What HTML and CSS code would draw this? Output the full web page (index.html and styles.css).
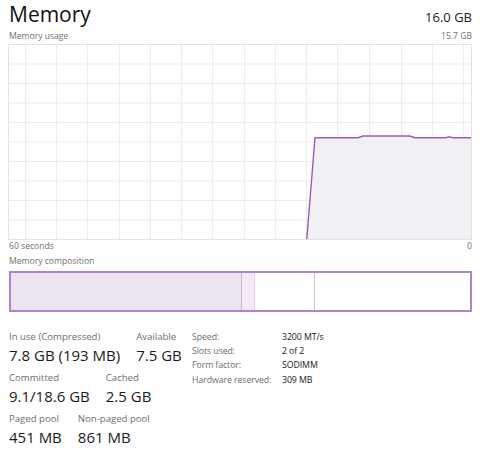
FILE: index.html
```html
<!DOCTYPE html>
<html>
<head>
<meta charset="utf-8">
<link rel="stylesheet" href="styles.css">
</head>
<body>
<div class="page">
  <div class="header">
    <div class="title">Memory</div>
    <div class="total">16.0 GB</div>
  </div>
  <div class="caption caption-top">
    <span>Memory usage</span>
    <span>15.7 GB</span>
  </div>
  <svg class="graph" width="464" height="196" viewBox="0 0 464 196">
    <g class="grid">
      <line x1="0" y1="20" x2="464" y2="20"/>
      <line x1="0" y1="39.5" x2="464" y2="39.5"/>
      <line x1="0" y1="59" x2="464" y2="59"/>
      <line x1="0" y1="78.5" x2="464" y2="78.5"/>
      <line x1="0" y1="98" x2="464" y2="98"/>
      <line x1="0" y1="117.5" x2="464" y2="117.5"/>
      <line x1="0" y1="137" x2="464" y2="137"/>
      <line x1="0" y1="156.5" x2="464" y2="156.5"/>
      <line x1="0" y1="176" x2="464" y2="176"/>
      <line x1="17.5" y1="0" x2="17.5" y2="196"/>
      <line x1="48.5" y1="0" x2="48.5" y2="196"/>
      <line x1="79.5" y1="0" x2="79.5" y2="196"/>
      <line x1="111.5" y1="0" x2="111.5" y2="196"/>
      <line x1="142.5" y1="0" x2="142.5" y2="196"/>
      <line x1="173.5" y1="0" x2="173.5" y2="196"/>
      <line x1="204.5" y1="0" x2="204.5" y2="196"/>
      <line x1="236.5" y1="0" x2="236.5" y2="196"/>
      <line x1="267.5" y1="0" x2="267.5" y2="196"/>
      <line x1="298.5" y1="0" x2="298.5" y2="196"/>
      <line x1="329.5" y1="0" x2="329.5" y2="196"/>
      <line x1="361.5" y1="0" x2="361.5" y2="196"/>
      <line x1="393.5" y1="0" x2="393.5" y2="196"/>
      <line x1="424.5" y1="0" x2="424.5" y2="196"/>
      <line x1="455.5" y1="0" x2="455.5" y2="196"/>
    </g>
    <polygon class="area" points="298.7,195.5 307,93.7 350,93.7 355,92 402,92 407,93.7 438,93.7 441,92.7 445,93.7 463,93.7 463,195.5"/>
    <polyline class="line" points="298.7,196 307,93.7 350,93.7 355,92 402,92 407,93.7 438,93.7 441,92.7 445,93.7 463,93.7"/>
    <rect class="frame" x="0.5" y="0.5" width="463" height="195"/>
  </svg>
  <div class="caption caption-axis">
    <span>60 seconds</span>
    <span>0</span>
  </div>
  <div class="caption caption-comp">
    <span>Memory composition</span>
  </div>
  <div class="comp">
    <div class="seg seg-inuse" style="width:231px"></div>
    <div class="seg seg-modified" style="width:13px"></div>
    <div class="seg seg-standby" style="width:60px"></div>
    <div class="seg seg-free"></div>
  </div>
  <div class="stats">
    <div class="stats-left">
      <div class="stat-row">
        <div class="stat">
          <div class="stat-label">In use (Compressed)</div>
          <div class="stat-value">7.8 GB (193 MB)</div>
        </div>
        <div class="stat">
          <div class="stat-label">Available</div>
          <div class="stat-value">7.5 GB</div>
        </div>
      </div>
      <div class="stat-row">
        <div class="stat">
          <div class="stat-label">Committed</div>
          <div class="stat-value">9.1/18.6 GB</div>
        </div>
        <div class="stat">
          <div class="stat-label">Cached</div>
          <div class="stat-value">2.5 GB</div>
        </div>
      </div>
      <div class="stat-row">
        <div class="stat">
          <div class="stat-label">Paged pool</div>
          <div class="stat-value">451 MB</div>
        </div>
        <div class="stat">
          <div class="stat-label">Non-paged pool</div>
          <div class="stat-value">861 MB</div>
        </div>
      </div>
    </div>
    <div class="specs">
      <div class="spec-label">Speed:</div><div class="spec-value">3200 MT/s</div>
      <div class="spec-label">Slots used:</div><div class="spec-value">2 of 2</div>
      <div class="spec-label">Form factor:</div><div class="spec-value">SODIMM</div>
      <div class="spec-label">Hardware reserved:</div><div class="spec-value">309 MB</div>
    </div>
  </div>
</div>
</body>
</html>
```
FILE: styles.css
```css
html, body {
  margin: 0;
  padding: 0;
  background: #ffffff;
}
body {
  font-family: "Open Sans", "Noto Sans", sans-serif;
  color: #1a1a1a;
  width: 484px;
  height: 450px;
  overflow: hidden;
}
.page {
  padding: 0 12px 0 8px;
}
.header {
  display: flex;
  justify-content: space-between;
  align-items: baseline;
  height: 28px;
  padding-left: 1px;
}
.title {
  font-size: 21px;
  line-height: 28px;
  color: #111;
}
.total {
  font-size: 13px;
  line-height: 28px;
  color: #1a1a1a;
}
.caption {
  display: flex;
  justify-content: space-between;
  font-size: 8.6px;
  color: #707070;
  padding-left: 1px;
}
.caption-top {
  line-height: 16px;
  height: 16px;
}
.caption-axis {
  line-height: 12px;
  height: 12px;
}
.caption-comp {
  line-height: 19px;
  height: 19px;
}
.graph {
  display: block;
}
.grid line {
  stroke: #ececec;
  stroke-width: 1;
}
.frame {
  fill: none;
  stroke: #e2e2e2;
  stroke-width: 1;
}
.area {
  fill: #f2f0f4;
}
.line {
  fill: none;
  stroke: #9b5cb4;
  stroke-width: 1.4;
}
.comp {
  display: flex;
  margin-left: 1px;
  width: 463px;
  height: 41px;
  box-sizing: border-box;
  border: 2px solid #b084c8;
}
.seg {
  height: 100%;
  box-sizing: border-box;
}
.seg-inuse {
  background: #ece4f1;
  border-right: 1px solid #c7b3d2;
}
.seg-modified {
  background: #f2eaf6;
  border-right: 1px solid #ddd0e5;
}
.seg-standby {
  background: #ffffff;
  border-right: 1px solid #cdbfd6;
}
.seg-free {
  flex: 1;
  background: #ffffff;
}
.stats {
  display: flex;
  margin-top: 18px;
  padding-left: 1px;
}
.stats-left {
  width: 183px;
  display: flex;
  flex-direction: column;
  gap: 5px;
}
.stat-row {
  display: flex;
  gap: 16px;
}
.stat-label {
  font-size: 9.6px;
  line-height: 14px;
  color: #6e6e6e;
}
.stat-value {
  font-size: 15px;
  line-height: 22px;
  color: #1a1a1a;
}
.specs {
  display: grid;
  grid-template-columns: 90px auto;
  align-content: start;
  font-size: 8.8px;
  line-height: 14.2px;
  letter-spacing: -0.1px;
}
.spec-label {
  color: #6e6e6e;
}
.spec-value {
  color: #1a1a1a;
}
```
